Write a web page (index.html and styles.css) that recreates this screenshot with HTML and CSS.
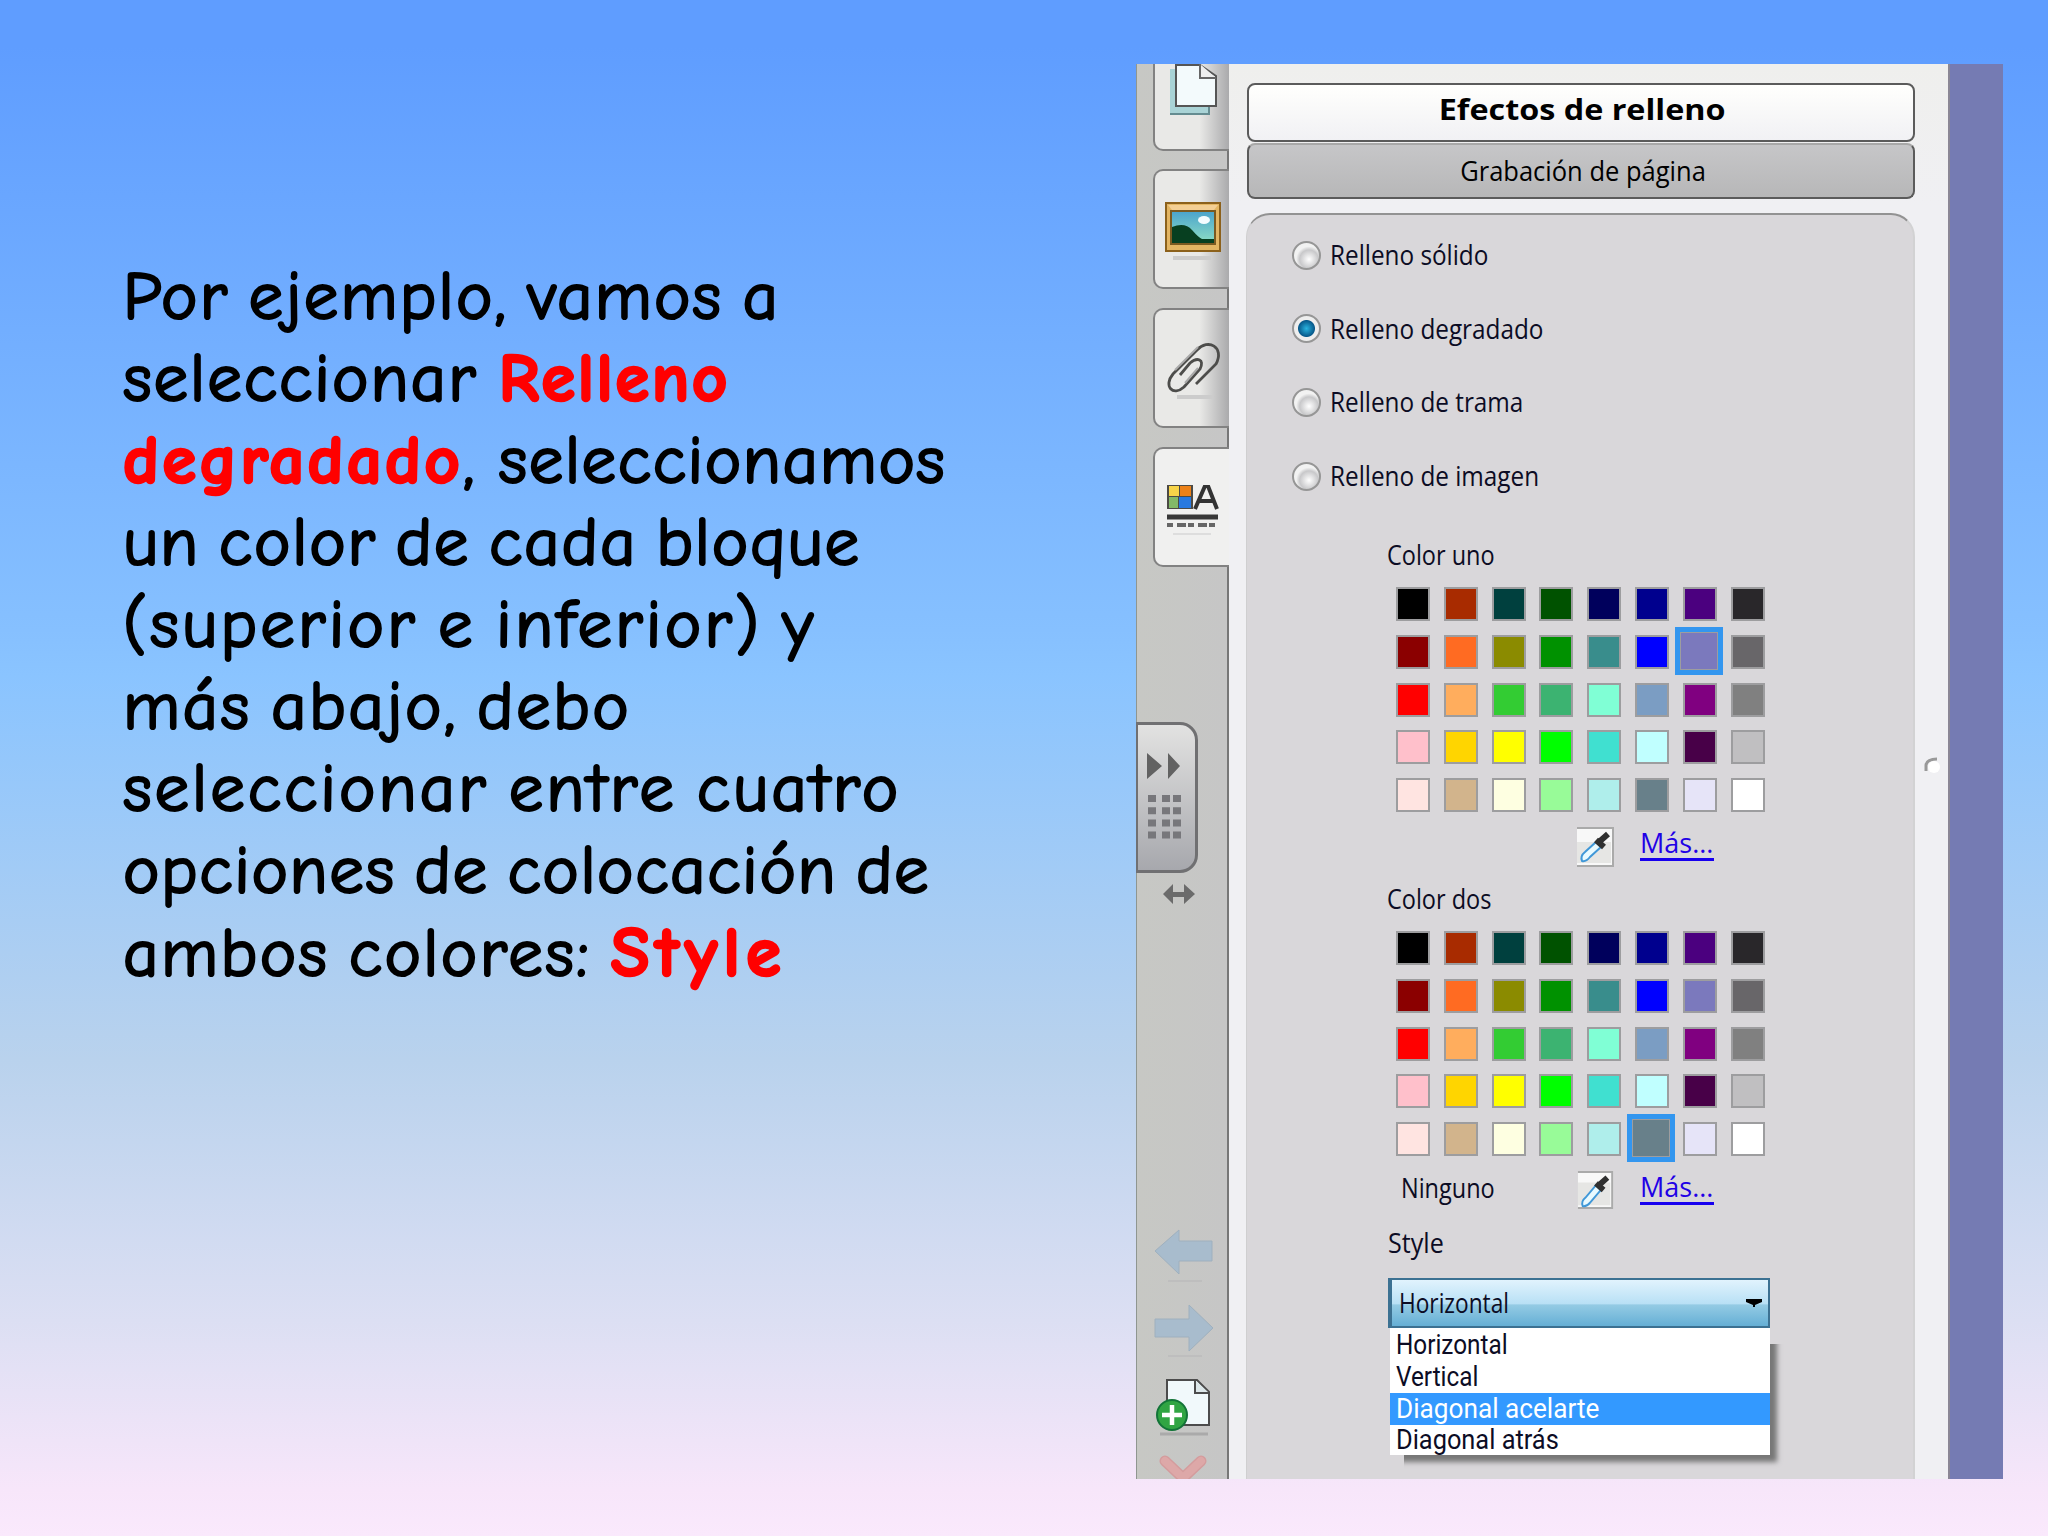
FILE: index.html
```html
<!DOCTYPE html>
<html lang="es">
<head>
<meta charset="utf-8">
<title>Efectos de relleno</title>
<link rel="stylesheet" href="styles.css">
</head>
<body>
<main class="slide">
  <p class="copy">
    <span class="line l1">Por ejemplo, vamos a</span>
    <span class="line l2">seleccionar <b>Relleno</b></span>
    <span class="line l3"><b>degradado</b>, seleccionamos</span>
    <span class="line l4">un color de cada bloque</span>
    <span class="line l5">(superior e inferior) y</span>
    <span class="line l6">más abajo, debo</span>
    <span class="line l7">seleccionar entre cuatro</span>
    <span class="line l8">opciones de colocación de</span>
    <span class="line l9">ambos colores: <b>Style</b></span>
  </p>
  <section class="window">
    <aside class="rail">
      <div class="tab tab-first">
        <svg width="50" height="54" viewBox="0 0 50 54"><path d="M2 5H8V43H40V51H2Z" fill="#a9d3d6"/><path d="M2 50H41V43" fill="none" stroke="#658c91" stroke-width="2"/><path d="M8 1H32L48 12V42H8Z" fill="#f3fafc" stroke="#555" stroke-width="2"/><path d="M32 0V14H48" fill="#eee" stroke="#666" stroke-width="2"/></svg>
      </div>
      <div class="tab">
        <svg width="56" height="58" viewBox="0 0 56 58"><defs><linearGradient id="sky" x2="0" y2="1"><stop stop-color="#4aa3cc"/><stop offset="1" stop-color="#8fe0c4"/></linearGradient></defs><path d="M8 56H46" stroke="#ccc" stroke-width="4"/><path d="M1 1H55V49H1Z" fill="#e3b562" stroke="#8c611b" stroke-width="2"/><path d="M3 3H53L49 8H7Z" fill="#f3cf94"/><path d="M6 9H50V42H6Z" fill="url(#sky)" stroke="#7b5a20" stroke-width="2"/><path d="M7 25Q20 20 27 28T37 37H49V41H7Z" fill="#073f20"/><ellipse cx="39" cy="18" rx="6" ry="4" fill="#f4fcff"/></svg>
      </div>
      <div class="tab">
        <svg width="56" height="58" viewBox="0 0 56 58"><path d="M12 56H48" stroke="#ccc" stroke-width="4"/><path d="M31 43L51 23C60 6 43-3 32 9L8 33C-2 45 8 56 19 46L35 28C40 18 32 16 25 22L15 34" fill="none" stroke="#4d4d4b" stroke-width="2.8"/><path d="M33 6L10 29M20 42L33 27" fill="none" stroke="#aaa" stroke-width="2"/></svg>
      </div>
      <div class="tab tab-active">
        <svg width="52" height="52" viewBox="0 0 52 52"><path d="M0 0H26V24H0Z" fill="#4c4a45"/><path d="M2 1H12V11H2Z" fill="#f7d449"/><path d="M13 1H24V11H13Z" fill="#ec8118"/><path d="M2 12H11V23H2Z" fill="#83b967"/><path d="M12 12H24V23H12Z" fill="#2879df"/><path d="M28 24L38 1H41L50 24M32 16H46" fill="none" stroke="#333" stroke-width="4"/><path d="M0 32H51" stroke="#383838" stroke-width="5"/><path d="M0 40H51" stroke="#666" stroke-width="4" stroke-dasharray="6 4 9 2"/><path d="M6 49H44" stroke="#ddd" stroke-width="2"/></svg>
      </div>
      <div class="handle">
        <svg width="36" height="90" viewBox="0 0 36 90"><path d="M1 0L16 13L1 26ZM22 0L34 13L22 26Z" fill="#626262"/><path d="M6 42V88M20 42V88M31 42V88" stroke="#77777b" stroke-width="8" stroke-dasharray="7 5.2"/></svg>
      </div>
      <svg class="resize" width="32" height="20" viewBox="0 0 32 20"><path d="M0 10L10 0V8H21V0L32 10L21 20V13H10V20Z" fill="#6b6b6b"/></svg>
      <svg class="back" width="60" height="54" viewBox="0 0 60 54"><path d="M1 22L25 1V12H58V32H25V45Z" fill="#a8bccd" stroke="#9fb0be"/><path d="M14 52H48" stroke="#bebebe" stroke-width="2"/></svg>
      <svg class="next" width="60" height="54" viewBox="0 0 60 54"><path d="M59 24L35 1V15H1V33H35V47Z" fill="#a8bccd" stroke="#9fb0be"/><path d="M14 52H48" stroke="#bebebe" stroke-width="2"/></svg>
      <svg class="add" width="56" height="60" viewBox="0 0 56 60"><path d="M4 56H52" stroke="#aaa" stroke-width="3"/><path d="M11 2H41L53 14V47H11Z" fill="#f1f9fb" stroke="#4c4c4c" stroke-width="2"/><path d="M39 2V15H53" fill="#dce7e9" stroke="#4c4c4c" stroke-width="2"/><circle cx="16" cy="37" r="15" fill="#31a543" stroke="#137438" stroke-width="2"/><path d="M16 27V47M6 37H26" stroke="#fff" stroke-width="4.5"/></svg>
      <svg class="remove" width="48" height="24" viewBox="0 0 48 24"><path d="M6 6L24 23L42 6" fill="none" stroke="#d49c9d" stroke-width="11" stroke-linecap="round"/><path d="M6 6L24 23L42 6" fill="none" stroke="#dda8a8" stroke-width="8" stroke-linecap="round"/></svg>
    </aside>
    <div class="content">
      <h1 class="bar"><span>Efectos de relleno</span></h1>
      <div class="bar bar-off"><span>Grabación de página</span></div>
      <div class="panel">
        <ul class="radios">
          <li><i></i><span>Relleno sólido</span></li>
          <li class="on"><i></i><span>Relleno degradado</span></li>
          <li><i></i><span>Relleno de trama</span></li>
          <li><i></i><span>Relleno de imagen</span></li>
        </ul>
        <div class="block">
          <h2><span>Color uno</span></h2>
          <div class="swatches" id="one"></div>
          <div class="tools"><span class="none"></span>
            <svg class="drop" width="38" height="40" viewBox="0 0 38 40"><path d="M0 1H36V39H0" fill="#f8f8f8" stroke="#aaa" stroke-width="2"/><path d="M0 15H34V36H0Z" fill="#e6e6e4"/><path d="M5 34Q3 29 8 25L19 15L24 20L13 30Q9 35 5 34Z" fill="#e9faff" stroke="#4098d8" stroke-width="2"/><path d="M19 13L27 20M22 15L31 7" stroke="#303030" stroke-width="6"/></svg>
            <a class="more"><span>Más...</span></a></div>
        </div>
        <div class="block">
          <h2><span>Color dos</span></h2>
          <div class="swatches" id="two"></div>
          <div class="tools"><span class="none">Ninguno</span>
            <svg class="drop" width="38" height="38" viewBox="0 0 38 40"><path d="M0 1H36V39H0" fill="#f8f8f8" stroke="#aaa" stroke-width="2"/><path d="M0 12H34V36H0Z" fill="#e6e6e4"/><path d="M5 37Q3 32 8 28L19 15L24 20L13 33Q9 38 5 37Z" fill="#e9faff" stroke="#4098d8" stroke-width="2"/><path d="M19 13L27 20M22 15L31 7" stroke="#303030" stroke-width="6"/></svg>
            <a class="more"><span>Más...</span></a></div>
        </div>
        <h2 class="style-title"><span>Style</span></h2>
        <div class="combo"><span>Horizontal</span><svg width="16" height="10" viewBox="0 0 16 10"><path d="M0 1H16V4L9 7V9H7V7L0 4Z"/></svg></div>
        <ul class="options">
          <li><span>Horizontal</span></li>
          <li><span>Vertical</span></li>
          <li class="picked"><span>Diagonal acelarte</span></li>
          <li><span>Diagonal atrás</span></li>
        </ul>
      </div>
      <svg class="grip" width="18" height="18" viewBox="0 0 18 18"><path d="M3 15V9Q4 3 14 3" fill="none" stroke="#999" stroke-width="3"/><circle cx="11" cy="11" r="6" fill="#fff"/></svg>
    </div>
    <div class="canvas"></div>
  </section>
</main>
<script src="swatches.js"></script>
</body>
</html>
```
FILE: swatches.js
```js
const colors = [
  '#000000', '#a82b00', '#00403e', '#005200', '#00005c', '#00008e', '#4b007f', '#29272a',
  '#8b0000', '#ff6b22', '#8b8b00', '#009100', '#398d8c', '#0000ff', '#7b79bd', '#686669',
  '#ff0000', '#ffad5d', '#33cc33', '#3cb371', '#80ffd5', '#7b9dc3', '#800080', '#808080',
  '#ffc0cb', '#ffd500', '#ffff00', '#00ff00', '#40e0d0', '#c0ffff', '#480048', '#c0bfc1',
  '#ffe4e1', '#d2b48c', '#feffe1', '#98fb98', '#afeeeb', '#68808a', '#e6e4f8', '#ffffff'
];
function fill(id, selected) {
  const grid = document.getElementById(id);
  colors.forEach((color, index) => {
    const cell = document.createElement('i');
    cell.style.backgroundColor = color;
    if (index === selected) cell.className = 'selected';
    grid.append(cell);
  });
}
fill('one', 14);
fill('two', 37);
```
FILE: styles.css
```css
* { box-sizing: border-box; }
body { margin: 0; }
h1, h2, p, ul { margin: 0; padding: 0; list-style: none; font-weight: normal; }
svg { display: block; flex: none; }
.slide {
  width: 2048px; height: 1536px; overflow: hidden;
  display: flex; align-items: flex-start;
  background: linear-gradient(#5f9dff 0, #5f9dff 3%, #86c0ff 41%, #8ac4ff 44%, #b9d2ed 69%, #dcdff3 86%, #f7e6fa 97%, #fae9fc 100%);
}
.copy {
  width: 1136px; padding: 256px 0 0 123px; color: #000;
  font: 69px/82px "Comic Sans MS", "Comic Neue", "Noto Sans", sans-serif;
  font-variant-ligatures: none; -webkit-text-stroke: 2.2px currentColor;
}
.copy b { color: #f00; -webkit-text-stroke-width: 2.6px; }
.line { display: block; height: 82px; white-space: nowrap; word-spacing: -6px; }
.l1 { letter-spacing: 2.2px; }
.l2 { letter-spacing: 2px; word-spacing: -4px; }
.l2 b { letter-spacing: 2.5px; }
.l3 { letter-spacing: 1.6px; word-spacing: -2px; }
.l3 b { letter-spacing: 3.2px; }
.l4 { letter-spacing: 1.8px; }
.l5 { letter-spacing: 3.2px; }
.l6 { letter-spacing: 2.4px; }
.l7 { letter-spacing: 3px; }
.l8 { letter-spacing: 1.6px; }
.l9 { letter-spacing: 2.4px; }
.l9 b { letter-spacing: 6px; font-size: 71px; }
.window {
  width: 867px; height: 1415px; margin-top: 64px; overflow: hidden;
  display: grid; grid-template-columns: 93px 719px 55px;
  font: 27px/32px "Open Sans", sans-serif; color: #0c0c24;
}
.canvas { background: #757bb3; border-left: 2px solid #8b8795; }
.rail {
  background: linear-gradient(90deg, #c7c8c4, #c6c6c6); border-left: 1px solid #8f9690; border-right: 2px solid #777;
  display: flex; flex-direction: column;
}
.tab {
  width: 76px; height: 120px; flex: none; margin: 0 0 19px 16px; padding-left: 10px;
  display: flex; align-items: center; border: 2px solid #828282; border-right: 0;
  border-radius: 10px 0 0 10px; background: linear-gradient(90deg, #e9e9e7 60%, #aaaaac);
}
.tab svg { margin-top: 3px; }
.tab-first { height: 87px; border-top: 0; border-radius: 0 0 0 10px; align-items: flex-start; margin-bottom: 18px; padding-left: 13px; }
.tab-first svg { margin-top: 0; }
.tab-active { width: 78px; background: #f0f0ef; padding-left: 12px; }
.tab-active svg { margin-top: 7px; }
.handle {
  width: 62px; height: 151px; flex: none; margin: 136px 0 0 -1px; padding: 28px 0 0 8px;
  border: 3px solid #707072; border-left-width: 2px; border-radius: 0 18px 18px 0;
  background: linear-gradient(#e2e2e1, #a7a8ad);
}
.resize { margin: 11px 0 0 26px; }
.back { margin: 325px 0 0 17px; }
.next { margin: 21px 0 0 17px; }
.add { margin: 20px 0 0 19px; }
.remove { margin: 17px 0 0 22px; }
.content {
  background: linear-gradient(#efefed, #f0f0f3 10%); padding: 19px 33px 0 18px; position: relative;
}
.bar {
  height: 59px; border: 2px solid #5b5b5b; border-radius: 8px; background: linear-gradient(#fffffd, #f1f1f4);
  display: flex; justify-content: center; align-items: center; font: bold 28px/32px "Open Sans", sans-serif; color: #000;
}
.bar span { transform: scaleX(1.155); white-space: nowrap; margin: 0 0 8px 2px; }
.bar-off { height: 56px; margin-top: 1px; background: linear-gradient(#c6c6c8, #b7b7b8); border-top-color: #a8a8a8; font: 27px/32px "Open Sans", sans-serif; }
.bar-off span { transform: scaleX(.945); margin: 0 0 0 4px; }
.panel {
  height: 1266px; margin: 14px 0 0 -1px; padding: 24px 0 0 45px;
  background: #d9d7da; border-top: 2px solid #929292; border-left: 1px solid #cfcfd0; border-right: 2px solid #d2d2d3; border-radius: 24px 24px 0 0;
}
.radios { display: grid; gap: 41.7px; }
.radios li { display: flex; align-items: center; gap: 9px; white-space: nowrap; height: 32px; }
.radios i {
  width: 29px; height: 29px; border: 2px solid #969696; border-radius: 50%;
  background: radial-gradient(circle at 60% 65%, #fff, #c8c8ca 42%, #f2f2f2 58%);
}
.radios .on i { background: radial-gradient(circle, #29b3df 0, #07598b 8px, #eee 9px); }
.radios span, h2 span, .none, .combo span, .options span, .more span { display: inline-block; transform: scaleX(.87); transform-origin: left; white-space: nowrap; }
.radios span { transform: scaleX(.9); }
.block { margin-left: 95px; height: 344px; }
.radios + .block { margin-top: 47px; }
h2 { font: inherit; height: 32px; }
.swatches { display: grid; grid-template: repeat(5, 34px) / repeat(8, 34px); gap: 13.8px; margin: 16px 0 0 9px; }
.swatches i { border: 2px solid #9d9d9f; }
.swatches .selected { margin: -4px; width: 40px; height: 40px; outline: 5px solid #3396ef; outline-offset: -1px; }
.tools { display: flex; align-items: flex-start; height: 44px; margin-top: 14px; }
.none { width: 176px; margin-left: 14px; padding-top: 2px; }
.drop { margin: 1px 25px 0 0; }
.more { color: #2100e6; width: 74px; height: 35px; border-bottom: 3px solid #1700ef; padding-top: 1px; }
.more span { transform: scaleX(1); }
.style-title { margin: 0 0 0 96px; }
.style-title span { transform: scaleX(.93); }
.combo {
  width: 382px; height: 50px; margin: 19px 0 0 96px; padding: 0 6px 0 7px; display: flex; justify-content: space-between; align-items: center;
  background: linear-gradient(#e1f3fd, #b8e0f5 52%, #94cbe4 54%, #65afd5); border: 2px solid #3c7192; border-left-width: 4px;
}
.combo span { transform: scaleX(.84); }
.options { width: 380px; margin: 0 0 0 98px; padding-top: 1px; background: #fff; box-shadow: 7px 7px 5px #777; font: 27px/32px Roboto, sans-serif; clip-path: polygon(0 0, 100% 0, 100% 16px, 400px 16px, 400px 142px, 14px 142px, 14px 100%, 0 100%); }
.options li { height: 32px; padding-left: 6px; }
.options li:last-child { height: 30px; line-height: 30px; }
.options span { transform: scaleX(.9); }
.options .picked { background: #3399ff; color: #fff; }
.options .picked span { transform: scaleX(.97); }
.options li:last-child span { transform: scaleX(.94); }
.grip { position: absolute; left: 694px; top: 692px; }
```
